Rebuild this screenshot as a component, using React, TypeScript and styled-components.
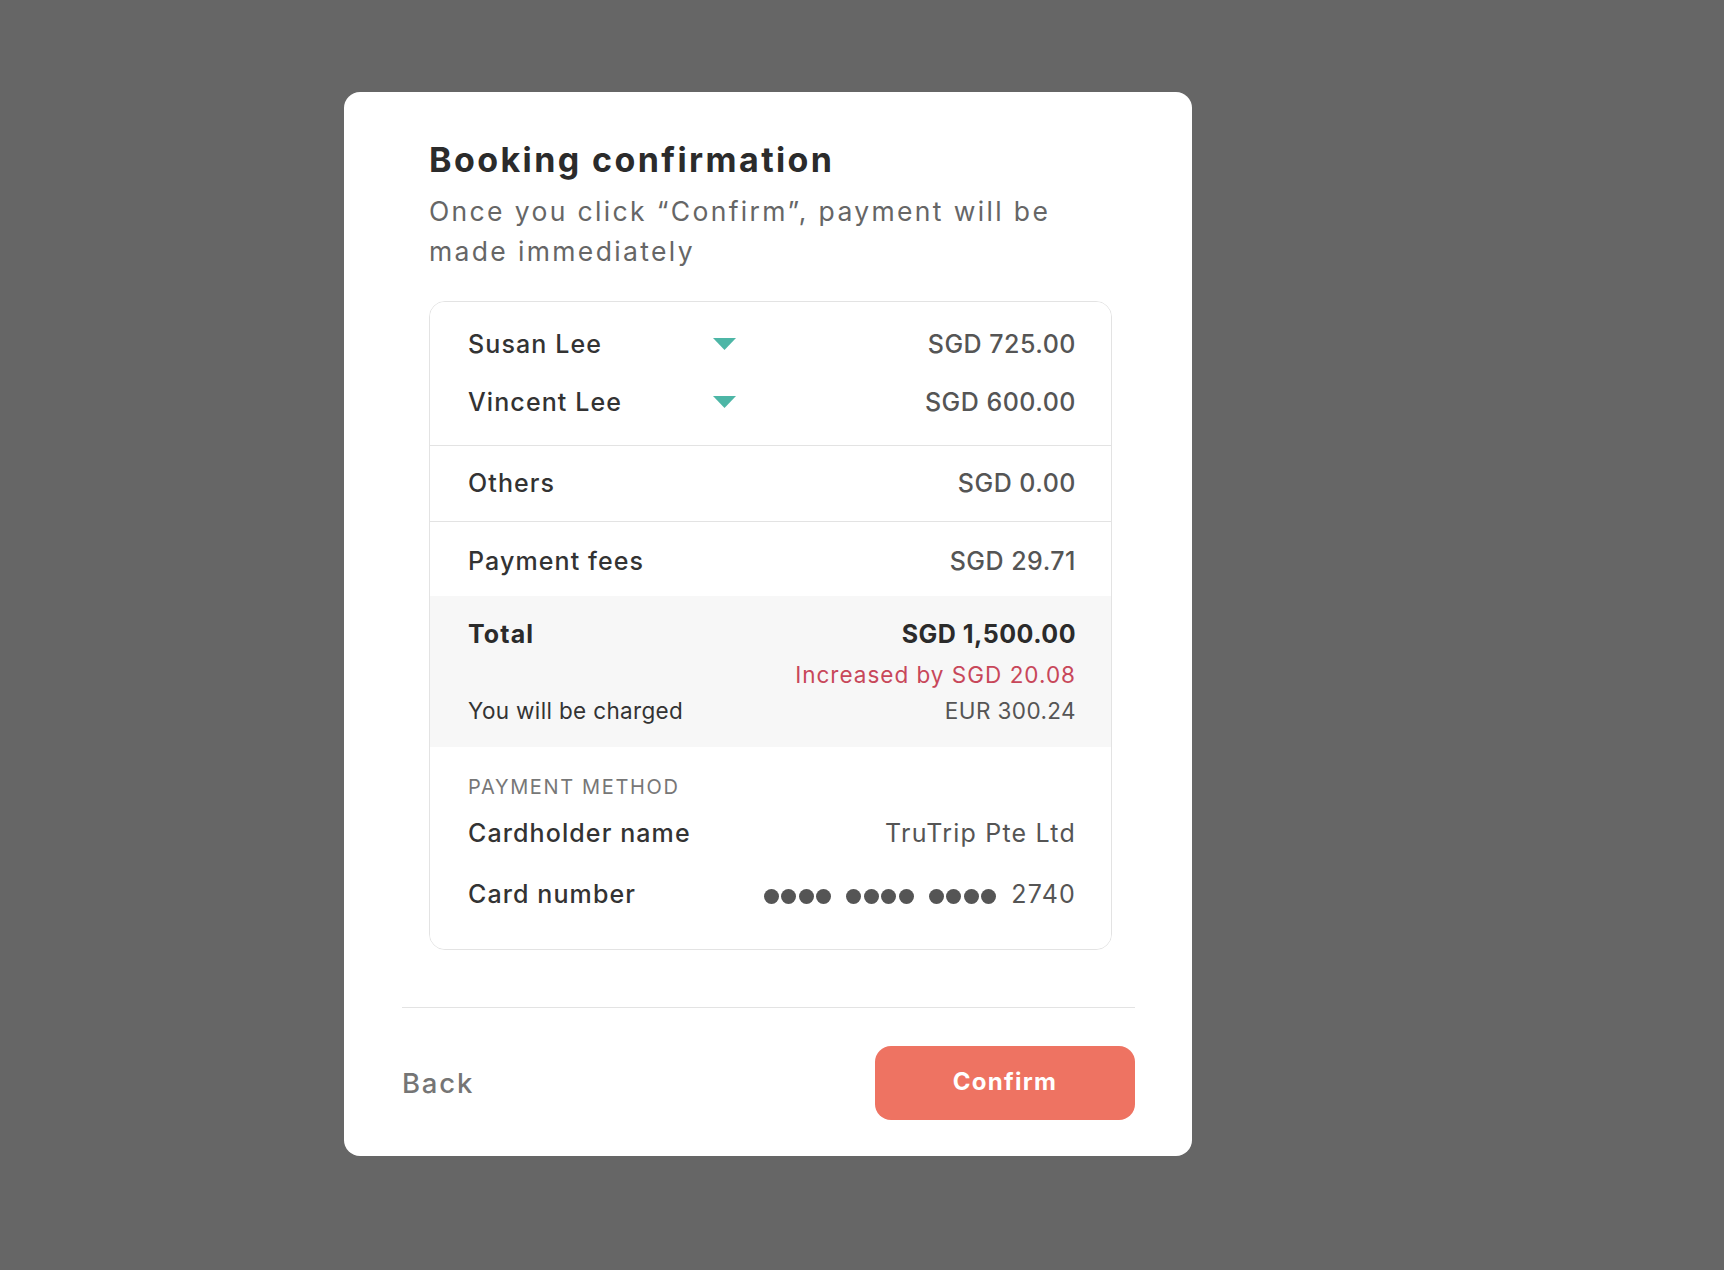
import React from "react";
import styled, { createGlobalStyle } from "styled-components";

const GlobalStyle = createGlobalStyle`
  html, body { margin: 0; padding: 0; }
  body {
    background: #666666;
    font-family: Inter, "Noto Sans", Arial, sans-serif;
    -webkit-font-smoothing: antialiased;
  }
  * { box-sizing: border-box; }
`;

const Page = styled.div`
  min-height: 1270px;
  padding: 92px 0 0 344px;
`;

const Modal = styled.div`
  width: 848px;
  background: #ffffff;
  border-radius: 16px;
  padding: 48px 0 36px;
`;

const Body = styled.div`
  padding: 0 80px 0 85px;
`;

const Title = styled.h1`
  margin: 0;
  font-size: 34px;
  line-height: 40px;
  font-weight: 700;
  color: #2b2b2b;
  letter-spacing: 2.4px;
`;

const Subtitle = styled.p`
  margin: 11px 0 0;
  font-size: 26.5px;
  line-height: 40px;
  font-weight: 400;
  color: #666666;
  letter-spacing: 2.35px;
  max-width: 660px;
`;

const Card = styled.div`
  margin-top: 30px;
  border: 1px solid #e3e3e3;
  border-radius: 16px;
  overflow: hidden;
`;

const Section = styled.div<{ $pt: number; $pb: number; $shaded?: boolean; $divider?: boolean }>`
  padding: ${(p) => p.$pt}px 35px ${(p) => p.$pb}px 38px;
  background: ${(p) => (p.$shaded ? "#f7f7f7" : "#ffffff")};
  border-top: ${(p) => (p.$divider ? "1px solid #e3e3e3" : "none")};
`;

const PersonRow = styled.div`
  display: grid;
  grid-template-columns: 245px 23px 1fr;
  align-items: center;
  height: 58px;
`;

const Row = styled.div<{ $h?: number; $mt?: number }>`
  display: flex;
  justify-content: space-between;
  align-items: center;
  height: ${(p) => p.$h ?? 36}px;
  margin-top: ${(p) => p.$mt ?? 0}px;
`;

const Label = styled.span<{ $bold?: boolean }>`
  font-size: 25px;
  line-height: 36px;
  font-weight: ${(p) => (p.$bold ? 700 : 500)};
  color: ${(p) => (p.$bold ? "#2b2b2b" : "#333333")};
  letter-spacing: 1.1px;
  white-space: nowrap;
`;

const Value = styled.span<{ $bold?: boolean; $light?: boolean }>`
  font-size: 25px;
  line-height: 36px;
  font-weight: ${(p) => (p.$bold ? 700 : p.$light ? 400 : 500)};
  color: ${(p) => (p.$bold ? "#2b2b2b" : "#555555")};
  letter-spacing: ${(p) => (p.$light ? "1.2px" : "0.5px")};
  text-align: right;
  white-space: nowrap;
`;

const SmallText = styled.span<{ $color?: string; $ls?: number }>`
  font-size: 22.5px;
  line-height: 30px;
  font-weight: 400;
  color: ${(p) => p.$color ?? "#333333"};
  letter-spacing: ${(p) => p.$ls ?? 0.4}px;
  white-space: nowrap;
`;

const Note = styled.div`
  margin-top: 8px;
  text-align: right;
  height: 30px;
`;

const Caret = styled.svg`
  width: 23px;
  height: 12px;
  display: block;
`;

const MethodLabel = styled.div`
  font-size: 20px;
  line-height: 28px;
  font-weight: 400;
  color: #777777;
  letter-spacing: 1.65px;
  text-transform: uppercase;
`;

const Masked = styled.span`
  display: flex;
  align-items: center;
  gap: 15px;
`;

const DotGroup = styled.span`
  display: flex;
  gap: 2.5px;
  margin-top: 4px;
`;

const Dot = styled.span`
  width: 15px;
  height: 15px;
  border-radius: 50%;
  background: #555555;
`;

const Footer = styled.div`
  margin: 57px 57px 0 58px;
  border-top: 1px solid #e3e3e3;
  padding-top: 38px;
  display: flex;
  justify-content: space-between;
  align-items: center;
`;

const BackButton = styled.button`
  border: none;
  background: none;
  padding: 0;
  font-family: inherit;
  font-size: 27.5px;
  line-height: 36px;
  font-weight: 500;
  color: #757575;
  letter-spacing: 1.8px;
  cursor: pointer;
`;

const ConfirmButton = styled.button`
  width: 260px;
  height: 74px;
  border: none;
  border-radius: 16px;
  background: #ee7362;
  color: #ffffff;
  font-family: inherit;
  font-size: 24px;
  font-weight: 700;
  letter-spacing: 1.3px;
  padding: 0 0 3px;
  cursor: pointer;
`;

const people = [
  { name: "Susan Lee", amount: "SGD 725.00" },
  { name: "Vincent Lee", amount: "SGD 600.00" },
];

function Triangle() {
  return (
    <Caret viewBox="0 0 23 12">
      <path d="M0 0 H23 L11.5 12 Z" fill="#4db6a6" />
    </Caret>
  );
}

export default function App() {
  return (
    <>
      <GlobalStyle />
      <Page>
        <Modal>
          <Body>
            <Title>Booking confirmation</Title>
            <Subtitle>Once you click “Confirm”, payment will be made immediately</Subtitle>
            <Card>
              <Section $pt={13} $pb={14}>
                {people.map((p) => (
                  <PersonRow key={p.name}>
                    <Label>{p.name}</Label>
                    <Triangle />
                    <Value>{p.amount}</Value>
                  </PersonRow>
                ))}
              </Section>
              <Section $pt={19} $pb={20} $divider>
                <Row>
                  <Label>Others</Label>
                  <Value>SGD 0.00</Value>
                </Row>
              </Section>
              <Section $pt={21} $pb={17} $divider>
                <Row>
                  <Label>Payment fees</Label>
                  <Value>SGD 29.71</Value>
                </Row>
              </Section>
              <Section $pt={20} $pb={21} $shaded>
                <Row>
                  <Label $bold>Total</Label>
                  <Value $bold>SGD 1,500.00</Value>
                </Row>
                <Note>
                  <SmallText $color="#c8475a" $ls={1}>Increased by SGD 20.08</SmallText>
                </Note>
                <Row $h={30} $mt={6}>
                  <SmallText $ls={0.35}>You will be charged</SmallText>
                  <SmallText $color="#555555" $ls={0.4}>EUR 300.24</SmallText>
                </Row>
              </Section>
              <Section $pt={26} $pb={37}>
                <MethodLabel>Payment method</MethodLabel>
                <Row $mt={14}>
                  <Label>Cardholder name</Label>
                  <Value $light>TruTrip Pte Ltd</Value>
                </Row>
                <Row $mt={25}>
                  <Label>Card number</Label>
                  <Masked>
                    {[0, 1, 2].map((g) => (
                      <DotGroup key={g}>
                        {[0, 1, 2, 3].map((d) => (
                          <Dot key={d} />
                        ))}
                      </DotGroup>
                    ))}
                    <Value $light>2740</Value>
                  </Masked>
                </Row>
              </Section>
            </Card>
          </Body>
          <Footer>
            <BackButton>Back</BackButton>
            <ConfirmButton>Confirm</ConfirmButton>
          </Footer>
        </Modal>
      </Page>
    </>
  );
}
